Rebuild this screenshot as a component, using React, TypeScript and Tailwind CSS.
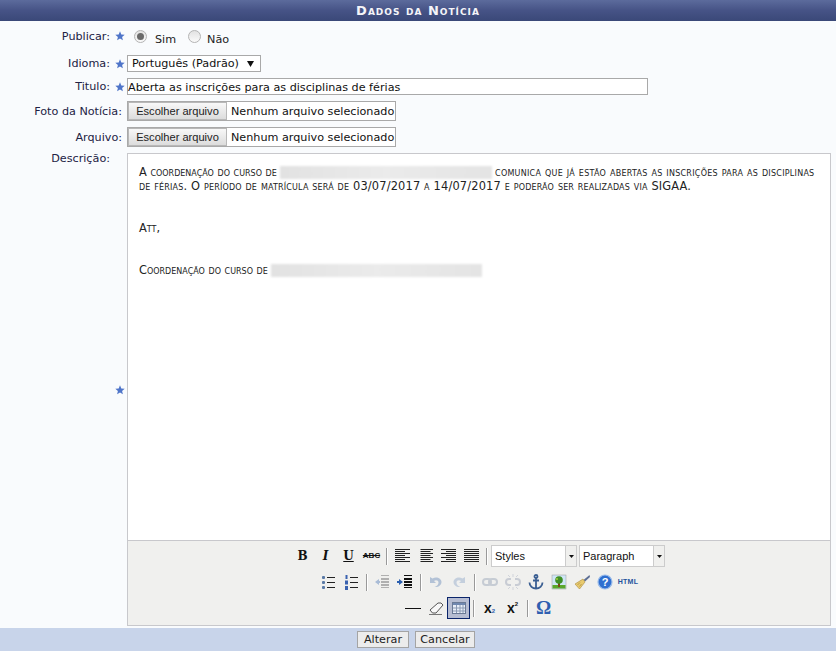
import React from "react";

const Star = () => (
  <svg width="10" height="10" viewBox="0 0 10 10" className="shrink-0">
    <path d="M5 .3 6.3 3.4 9.7 3.7 7.1 5.9 7.9 9.3 5 7.5 2.1 9.3 2.9 5.9.3 3.7 3.7 3.4Z" fill="#4f75c9" />
  </svg>
);

const Radio = ({ on }: { on?: boolean }) => (
  <span className="flex h-[13px] w-[13px] items-center justify-center rounded-full border border-[#b4b4b4] bg-gradient-to-b from-[#e2e2e2] to-[#fafafa]">
    {on && <span className="h-[7px] w-[7px] rounded-full bg-[#6a6a6a]" />}
  </span>
);

const Label = ({ children, star = true }: { children: React.ReactNode; star?: boolean }) => (
  <div className={`flex w-[127px] shrink-0 items-center justify-end gap-[5px] text-[#222244] ${star ? "pr-[2px]" : "pr-[5px]"}`}>
    <span className="pt-[2px]">{children}</span>
    {star && <Star />}
  </div>
);

const FileInput = () => (
  <div className="flex h-[20px] w-[269px] items-stretch border border-[#a9a9a9] bg-white">
    <div className="flex w-[99px] shrink-0 items-center justify-center border border-[#b8b8b8] bg-gradient-to-b from-[#f8f8f8] to-[#dcdcdc] font-['Liberation_Sans',sans-serif] text-[11.1px] text-[#222]">
      Escolher arquivo
    </div>
    <span className="whitespace-nowrap pl-[4px] leading-[19px] text-[#111]">Nenhum arquivo selecionado</span>
  </div>
);

const S = ({ children, w = 16, h = 16 }: { children: React.ReactNode; w?: number; h?: number }) => (
  <svg width={w} height={h} viewBox={`0 0 ${w} ${h}`} className="shrink-0">
    {children}
  </svg>
);

const Lines = ({ kind }: { kind: "l" | "c" | "r" | "j" }) => {
  const rows = [1, 3, 5, 7, 9, 11, 13];
  return (
    <S w={15} h={14}>
      {rows.map((y, i) => {
        const full = i % 2 === 0 || kind === "j";
        const w = full ? 15 : 10;
        const x = kind === "l" || kind === "j" ? 0 : kind === "r" ? 15 - w : 2.5;
        return <rect key={y} x={x} y={y - 1} width={w} height="1" fill="#222" />;
      })}
    </S>
  );
};

const Sep = () => (
  <div className="mx-[3px] flex h-[17px] w-[2px] shrink-0">
    <div className="w-px bg-[#999]" />
    <div className="w-px bg-white" />
  </div>
);

const Bold = "font-['DejaVu_Serif',serif] font-bold";

const Letter = ({ c, cls }: { c: string; cls: string }) => (
  <span className={`flex h-[20px] w-[23px] shrink-0 items-center justify-center text-[#111] ${cls}`}>{c}</span>
);

const Btn = ({ children }: { children: React.ReactNode }) => (
  <div className="flex h-[20px] w-[23px] shrink-0 items-center justify-center">{children}</div>
);

const Select = ({ label, w }: { label: string; w: string }) => (
  <div className={`flex h-[22px] items-stretch border border-[#cccccc] bg-white ${w}`}>
    <span className="flex-1 pl-[3px] font-['Liberation_Sans',sans-serif] text-[11px] leading-[20px] text-[#111]">{label}</span>
    <span className="flex w-[11px] items-center justify-center border-l border-[#cccccc] bg-[#f0f0ee]">
      <svg width="5" height="3" viewBox="0 0 5 3">
        <path d="M0 0h5L2.500 3Z" fill="#111" />
      </svg>
    </span>
  </div>
);

const Blur = ({ w }: { w: string }) => (
  <span className={`inline-block h-[13px] align-middle bg-gradient-to-r from-[#e2e2e2] via-[#ebebeb] to-[#e4e4e4] blur-[1px] ${w}`} />
);

export default function App() {
  return (
    <div className="flex h-[651px] w-[836px] flex-col overflow-hidden bg-[#f9fbfd] font-['DejaVu_Sans',Verdana,sans-serif] text-[11.2px]">
      <div className="flex h-[21px] shrink-0 items-center justify-center bg-gradient-to-b from-[#5c6b9c] via-[#465386] to-[#3a4878] font-['DejaVu_Sans',sans-serif] text-[13px] font-bold tracking-[1px] text-[#f4f4f8] [font-variant:small-caps]">
        Dados da Notícia
      </div>

      <div className="flex flex-col pr-[4px] pt-[5px]">
        <div className="flex h-[20px] items-center">
          <Label>Publicar:</Label>
          <div className="ml-[7px] flex items-center text-[#222]">
            <Radio on />
            <span className="ml-[8px] mt-[8px]">Sim</span>
            <span className="ml-[12px]"><Radio /></span>
            <span className="ml-[6px] mt-[8px]">Não</span>
          </div>
        </div>

        <div className="mt-[9px] flex h-[17px] items-center">
          <Label>Idioma:</Label>
          <div className="flex h-[17px] w-[134px] items-center justify-between border border-[#a9a9a9] bg-white pl-[4px] pr-[6px] text-[#111]">
            <span className="pt-[2px]">Português (Padrão)</span>
            <svg width="7" height="6" viewBox="0 0 7 6"><path d="M0 0h7L3.500 6Z" fill="#111" /></svg>
          </div>
        </div>

        <div className="mt-[6px] flex h-[17px] items-center">
          <Label>Titulo:</Label>
          <div className="h-[17px] w-[521px] whitespace-nowrap border border-[#a9a9a9] bg-white leading-[17px] text-[#111]">
            Aberta as inscrições para as disciplinas de férias
          </div>
        </div>

        <div className="mt-[6px] flex h-[20px] items-center">
          <Label star={false}>Foto da Notícia:</Label>
          <FileInput />
        </div>

        <div className="mt-[6px] flex h-[20px] items-center">
          <Label star={false}>Arquivo:</Label>
          <FileInput />
        </div>

        <div className="mt-[6px] flex h-[473px]">
          <div className="flex w-[127px] shrink-0 flex-col">
            <div className="pr-[17px] text-right leading-[12px] text-[#222244]">Descrição:</div>
            <div className="flex flex-1 items-center justify-end pb-[12px] pr-[2px]"><Star /></div>
          </div>
          <div className="flex w-[704px] flex-col border border-[#c8c8cc] bg-white">
            <div className="flex-1 bg-white pl-[11px] pt-[11px] text-[11.4px] leading-[14px] text-[#222] [font-variant:small-caps]">
              <p className="whitespace-nowrap">A coordenação do curso de <Blur w="w-[212px]" /> <span className="-ml-[1px] tracking-[0.25px]">comunica que já estão abertas as inscrições para as disciplinas</span></p>
              <p className="whitespace-nowrap tracking-[0.17px]">de férias. O período de matrícula será de 03/07/2017 a 14/07/2017 e poderão ser realizadas via SIGAA.</p>
              <p className="mt-[28px]">Att,</p>
              <p className="mt-[28px]">Coordenação do curso de <Blur w="w-[211px]" /></p>
            </div>

            <div className="flex h-[85px] shrink-0 flex-col items-center border-t border-[#c8c8cc] bg-[#f0f0ee] pr-[2px] pt-[2px]">
              <div className="flex h-[26px] items-center">
                <Letter c="B" cls={`${Bold} text-[12px]`} />
                <Letter c="I" cls={`${Bold} italic text-[12px]`} />
                <Letter c="U" cls={`${Bold} underline text-[12px]`} />
                <Letter c="ABC" cls="font-['Liberation_Sans',sans-serif] text-[8px] font-bold line-through" />
                <Sep />
                <Btn><Lines kind="l" /></Btn>
                <Btn><Lines kind="c" /></Btn>
                <Btn><Lines kind="r" /></Btn>
                <Btn><Lines kind="j" /></Btn>
                <Sep />
                <Select label="Styles" w="w-[86px]" />
                <span className="w-[2px]" />
                <Select label="Paragraph" w="w-[86px]" />
              </div>

              <div className="flex h-[26px] items-center">
                <Btn>
                  <S>
                    <g fill="#5a7aa6"><rect x="2" y="2" width="3" height="3" rx="1" /><rect x="2" y="7" width="3" height="3" rx="1" /><rect x="2" y="12" width="3" height="3" rx="1" /></g>
                    <g fill="#222"><rect x="7" y="3" width="8" height="1" /><rect x="7" y="8" width="8" height="1" /><rect x="7" y="13" width="8" height="1" /></g>
                  </S>
                </Btn>
                <Btn>
                  <S>
                    <g fill="#3a62b0"><rect x="2.500" y="1" width="2" height="4" /><rect x="2" y="6.500" width="3" height="4" /><rect x="2" y="12" width="3" height="4" /></g>
                    <g fill="#222"><rect x="7" y="3" width="8" height="1" /><rect x="7" y="8" width="8" height="1" /><rect x="7" y="13" width="8" height="1" /></g>
                  </S>
                </Btn>
                <Sep />
                <Btn>
                  <S>
                    <path d="M1 8l4-3v2h1v2H5v2Z" fill="#a9bcd6" />
                    <g fill="#b0b0b0"><rect x="7" y="1" width="8" height="1" /><rect x="7" y="4" width="8" height="2" /><rect x="7" y="7" width="8" height="2" /><rect x="7" y="10" width="8" height="2" /><rect x="7" y="13" width="8" height="1" /></g>
                  </S>
                </Btn>
                <Btn>
                  <S>
                    <path d="M6 8 2 5v2H0v2h2v2Z" fill="#2a5fb0" />
                    <g fill="#111"><rect x="7" y="1" width="8" height="1" /><rect x="7" y="4" width="8" height="2" /><rect x="7" y="7" width="8" height="2" /><rect x="7" y="10" width="8" height="2" /><rect x="7" y="13" width="8" height="1" /></g>
                  </S>
                </Btn>
                <Sep />
                <Btn>
                  <S>
                    <path d="M2 3v6h6L6 7c2-1.500 4.500-.5 4.500 1.500 0 2-1.500 3.500-4 4.500 4 .5 7-2 7-5 0-4-5.500-6-9-3.500Z" fill="#b3c2d6" />
                  </S>
                </Btn>
                <Btn>
                  <S>
                    <path d="M14 3v6H8l2-2C8 5.500 5.500 6.500 5.500 8.500c0 2 1.500 3.500 4 4.500-4 .5-7-2-7-5 0-4 5.500-6 9-3.500Z" fill="#c4cfdd" />
                  </S>
                </Btn>
                <Sep />
                <Btn>
                  <S>
                    <g fill="none" stroke="#c6ccd4" strokeWidth="2"><rect x="1" y="5" width="8" height="6" rx="3" /><rect x="7" y="5" width="8" height="6" rx="3" /></g>
                  </S>
                </Btn>
                <Btn>
                  <S>
                    <g fill="none" stroke="#c8ccd4" strokeWidth="2"><path d="M6 5H4a3 3 0 0 0 0 6h2M10 5h2a3 3 0 0 1 0 6h-2" /></g>
                    <path d="M8 0v3M8 13v3M3 1l2 2M13 1l-2 2M3 15l2-2M13 15l-2-2" stroke="#d0d3da" fill="none" />
                  </S>
                </Btn>
                <Btn>
                  <S>
                    <g fill="none" stroke="#3b5f92" strokeWidth="1.800"><circle cx="8" cy="2.500" r="1.500" /><path d="M8 4v10.500M5 6.500h6M1.500 8.500c0 3.500 3 6 6.500 6s6.500-2.500 6.500-6" /></g>
                  </S>
                </Btn>
                <Btn>
                  <S>
                    <rect x="1" y="1" width="14" height="14" fill="#cfe6f5" stroke="#999" strokeWidth=".5" />
                    <rect x="1.500" y="11" width="13" height="3.500" fill="#5aa62a" />
                    <rect x="7" y="8" width="2" height="5" fill="#7a4a1c" />
                    <circle cx="8" cy="6" r="3.800" fill="#3f8f25" />
                    <circle cx="6" cy="5" r="1" fill="#a4cc3c" />
                  </S>
                </Btn>
                <Btn>
                  <S>
                    <path d="M15.500 1 9.500 6l1.500 1.500L16 3Z" fill="#5d6f94" />
                    <path d="M9 5 1 10l4.500 5L11 8Z" fill="#e8ca6e" stroke="#a98a3c" strokeWidth=".6" />
                    <path d="M6 8.500 3.500 11M7.500 10 5.500 12.500" stroke="#a98a3c" strokeWidth=".7" />
                  </S>
                </Btn>
                <Btn>
                  <svg width="16" height="16" viewBox="0 0 16 16">
                    <circle cx="8" cy="8" r="7" fill="#2f6fd0" stroke="#9bbcea" strokeWidth="1.200" />
                    <text x="8" y="12" textAnchor="middle" fontSize="11" fontWeight="bold" fill="#fff" fontFamily="Liberation Sans">?</text>
                  </svg>
                </Btn>
                <span className="flex h-[20px] w-[23px] shrink-0 items-center justify-center font-['Liberation_Sans',sans-serif] text-[7px] font-bold tracking-[0.3px] text-[#23529c]">HTML</span>
              </div>

              <div className="flex h-[26px] items-center">
                <Btn><div className="h-[1px] w-[16px] bg-[#111]" /></Btn>
                <Btn>
                  <S>
                    <path d="M2 10 10 3h3l2 2-7 8H4.500Z" fill="#f8f8f8" stroke="#555" strokeWidth="1" />
                    <path d="M1 14.500h13" stroke="#777" />
                  </S>
                </Btn>
                <div className="flex h-[22px] w-[23px] shrink-0 items-center justify-center border border-[#0a246a] bg-[#b6bdd2]">
                  <S>
                    <rect x="1.500" y="2.500" width="13" height="11" fill="#e8eef8" stroke="#6a7a96" />
                    <rect x="2" y="3" width="12" height="2" fill="#7088b0" />
                    <path d="M2 8h12M2 11h12M5.500 5v8M9 5v8M12 5v8" stroke="#8a9ab4" />
                  </S>
                </div>
                <Sep />
                <span className="flex h-[20px] w-[23px] shrink-0 items-baseline justify-center pt-[2px] font-['Liberation_Sans',sans-serif] font-bold text-[#111]">
                  <span className="text-[14px] leading-[16px]">x</span><span className="text-[6px] leading-[6px] text-[#2f5fb0]">2</span>
                </span>
                <span className="flex h-[20px] w-[23px] shrink-0 items-center justify-center font-['Liberation_Sans',sans-serif] font-bold text-[#111]">
                  <span className="text-[14px] leading-[16px]">x</span><span className="mb-[8px] text-[6px] leading-[6px]">2</span>
                </span>
                <Sep />
                <span className="flex h-[20px] w-[23px] shrink-0 items-center justify-center font-['Liberation_Serif',serif] text-[19px] font-bold text-[#2f5fb0]">Ω</span>
              </div>
            </div>
          </div>
        </div>
      </div>

      <div className="mt-[2px] flex flex-1 items-center justify-center gap-[6px] bg-[#c8d4ea] pr-[4px]">
        <button className="h-[17px] w-[52px] border border-[#a4a4a4] bg-[#ececec] text-[11.2px] leading-[15px] text-[#222]">Alterar</button>
        <button className="h-[17px] w-[60px] border border-[#a4a4a4] bg-[#ececec] text-[11.2px] leading-[15px] text-[#222]">Cancelar</button>
      </div>
    </div>
  );
}
